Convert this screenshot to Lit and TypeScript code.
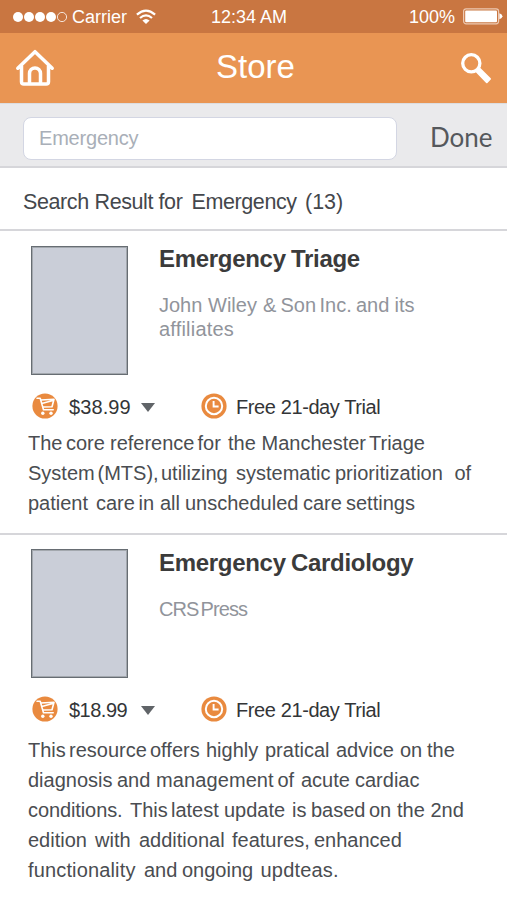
import { LitElement, html, css, svg } from "lit";
import { customElement, property } from "lit/decorators.js";

type Word = [start: number, text: string, tracking?: number];
type Line = Word[];

interface Book {
  title: Line;
  publisher: Line[];
  price: Line;
  text: Line[];
}

const heading: Line = [[0, "Search"], [71.5, "Result"], [135.5, "for"], [168.5, "Emergency"], [282, "(13)", 0]];

const books: Book[] = [
  {
    title: [[0, "Emergency"], [132, "Triage"]],
    publisher: [
      [[0, "John"], [49, "Wiley"], [104, "&"], [121.5, "Son"], [160.5, "Inc."], [197, "and"], [235.5, "its"]],
      [[0, "affiliates", 0.2]],
    ],
    price: [[0, "$38.99", 0.1]],
    text: [
      [[0, "The"], [38, "core"], [82, "reference"], [169.5, "for"], [200, "the"], [233.5, "Manchester"], [341, "Triage"]],
      [[0, "System"], [69.5, "(MTS),"], [133, "utilizing"], [208, "systematic"], [307, "prioritization"], [426.5, "of"]],
      [[0, "patient"], [68, "care"], [110.5, "in"], [132, "all"], [157, "unscheduled"], [275, "care"], [318, "settings"]],
    ],
  },
  {
    title: [[0, "Emergency"], [132, "Cardiology"]],
    publisher: [[[0, "CRS", -0.9], [41.5, "Press", -0.9]]],
    price: [[0, "$18.99", -0.5]],
    text: [
      [[0, "This"], [41, "resource"], [122, "offers"], [178, "highly"], [237, "pratical"], [308, "advice"], [372, "on"], [399, "the"]],
      [[0, "diagnosis"], [89, "and"], [128, "management", 0.1], [249.5, "of"], [273, "acute"], [327, "cardiac"]],
      [[0, "conditions.", -0.1], [102, "This"], [143, "latest"], [196, "update"], [264, "is"], [283, "based"], [341, "on"], [369, "the"], [402.5, "2nd"]],
      [[0, "edition"], [67, "with"], [111, "additional"], [204, "features,"], [286, "enhanced"]],
      [[0, "functionality", 0.15], [116, "and"], [154, "ongoing"], [232.5, "updteas.", 0.2]],
    ],
  },
];

@customElement("text-line")
class TextLine extends LitElement {
  @property({ attribute: false }) words: Line = [];

  static styles = css`
    :host { display: block; }
    .line { display: grid; white-space: pre; }
  `;

  render() {
    const columns = this.words
      .map(([x], i) => (i + 1 < this.words.length ? `${this.words[i + 1][0] - x}px` : "max-content"))
      .join(" ");
    return html`<div class="line" style="grid-template-columns:${columns}">${this.words.map(
      ([, word, tracking]) =>
        tracking === undefined
          ? html`<span>${word} </span>`
          : html`<span style="letter-spacing:${tracking}px">${word} </span>`
    )}</div>`;
  }
}

const cartIcon = svg`
  <circle cx="13" cy="13" r="12.6" fill="#e98a3f" />
  <path d="M5 5.200h3.200l3.300 11.600h9.700M9 7l13-.8-2 7.600-9.200.2M9.800 10.600l11-3" fill="none" stroke="#fff" stroke-width="1.600" stroke-linejoin="round" stroke-linecap="round" />
  <circle cx="10.800" cy="20.300" r="1.700" fill="#fff" /><circle cx="19" cy="20.300" r="1.700" fill="#fff" />`;

const clockIcon = svg`
  <circle cx="13" cy="13" r="12.6" fill="#e98a3f" />
  <circle cx="13" cy="13" r="8.200" fill="none" stroke="#fff" stroke-width="2" />
  <path d="M12.600 8v5.500h5" fill="none" stroke="#fff" stroke-width="1.900" />`;

@customElement("book-item")
class BookItem extends LitElement {
  @property({ attribute: false }) book!: Book;

  static styles = css`
    :host { display: block; box-sizing: border-box; padding: 14px 0 0 28px; }
    .head { display: flex; height: 130px; padding-left: 2.5px; }
    .cover {
      box-sizing: border-box; width: 97px; height: 129px; margin-top: var(--cover-gap, 0px); flex: none;
      background: #caced8; border: 1px solid #676d73; box-shadow: inset 0 0 0 1px #a3a8ae;
    }
    .info { margin-left: 31.5px; }
    .title { font-size: 24px; line-height: 28px; font-weight: 700; letter-spacing: -0.3px; color: #3b3b3b; }
    .publisher { margin-top: var(--publisher-gap, 20px); font-size: 20px; line-height: 24px; color: #91949b; }
    .offers { display: flex; align-items: center; height: 28px; margin-top: var(--offers-gap, 17px); padding-left: 4px; font-size: 20px; letter-spacing: -0.4px; color: #333537; }
    .icon { width: 26px; height: 26px; flex: none; margin-top: -3px; }
    .clock { margin-top: -2px; }
    .price { width: 72px; margin-left: 11px; }
    .arrow { width: 14px; height: 9px; margin-right: 45.5px; fill: #606468; }
    .trial { margin-left: 9.5px; }
    .text { margin-top: var(--text-gap, 11px); font-size: 20px; line-height: 30px; color: #4a4d51; }
  `;

  render() {
    const b = this.book;
    return html`
      <div class="head">
        <div class="cover"></div>
        <div class="info">
          <text-line class="title" .words=${b.title}></text-line>
          <div class="publisher">${b.publisher.map((l) => html`<text-line .words=${l}></text-line>`)}</div>
        </div>
      </div>
      <div class="offers">
        <svg class="icon" viewBox="0 0 26 26">${cartIcon}</svg>
        <text-line class="price" .words=${b.price}></text-line>
        <svg class="arrow" viewBox="0 0 14 9"><path d="M0 0h14L7 9z" /></svg>
        <svg class="icon clock" viewBox="0 0 26 26">${clockIcon}</svg>
        <span class="trial">Free 21-day Trial</span>
      </div>
      <div class="text">${b.text.map((l) => html`<text-line .words=${l}></text-line>`)}</div>
    `;
  }
}

@customElement("app-root")
class AppRoot extends LitElement {
  static styles = css`
    :host {
      display: block; width: 507px; height: 900px; overflow: hidden; background: #fff;
      font-family: "Liberation Sans", Arial, sans-serif;
    }
    .status { display: grid; grid-template-columns: 211px 1fr auto; align-items: center; height: 33px; background: #c97641; color: #fff; font-size: 18px; }
    .status span { padding-top: 2px; }
    .carrier { display: flex; align-items: center; padding-left: 12px; }
    .dots { width: 56px; height: 12px; margin-right: 4px; }
    .wifi { width: 20px; height: 16px; margin-left: 9px; }
    .power { display: flex; align-items: center; padding-right: 4px; }
    .battery { width: 40px; height: 17px; margin-left: 8px; }
    .nav { box-sizing: border-box; display: grid; grid-template-columns: 60px 1fr 60px; align-items: center; height: 70px; background: #e99553; color: #fff; }
    .home { width: 40px; height: 38px; margin-left: 15px; }
    .store { text-align: center; font-size: 33px; line-height: 40px; margin: -3px 0 0 4px; }
    .search { width: 32px; height: 32px; margin-left: 13px; }
    .finder { box-sizing: border-box; display: flex; align-items: flex-start; height: 65px; padding: 13px 0 0 23px; background: #eaeaec; border-bottom: 2px solid #d6d6da; border-top: 1px solid #dcdde0; }
    .field { box-sizing: border-box; width: 374px; height: 43px; padding-left: 15px; border: 1px solid #d3d6e3; border-radius: 8px; background: #fff; color: #a9afb8; font-size: 20px; line-height: 41px; letter-spacing: -0.2px; }
    .done { margin-left: 33px; font-family: Lato, sans-serif; font-size: 26px; line-height: 40px; color: #55585c; }
    .result { box-sizing: border-box; height: 63px; padding: 21px 0 0 23px; border-bottom: 2px solid #d6d6da; font-size: 21.5px; line-height: 26px; letter-spacing: -0.4px; color: #44474c; }
    .first {
      height: 304px; border-bottom: 2px solid #d6d6da;
      --cover-gap: 1px; --publisher-gap: 20px; --offers-gap: 18px; --text-gap: 7px;
    }
  `;

  render() {
    return html`
      <div class="status">
        <div class="carrier">
          <svg class="dots" viewBox="0 0 56 12">
            ${[6, 17, 28, 39].map((x) => svg`<circle cx=${x} cy="6" r="5" fill="#fff" />`)}
            <circle cx="50" cy="6" r="4.6" fill="none" stroke="#fff" stroke-width=".8" />
          </svg>
          <span>Carrier</span>
          <svg class="wifi" viewBox="0 0 20 16" fill="none" stroke="#fff" stroke-width="2.2">
            <path d="M.9 5.6Q10-2.4 19.1 5.6M4 9Q10 3.6 16 9" /><path d="M6.4 11.4Q10 8.4 13.6 11.4L10 15z" fill="#fff" stroke="none" />
          </svg>
        </div>
        <span>12:34 AM</span>
        <div class="power">
          <span>100%</span>
          <svg class="battery" viewBox="0 0 40 17">
            <rect x=".6" y=".8" width="35" height="15" rx="2.5" fill="none" stroke="#edc9b2" stroke-width="1.2" />
            <rect x="2.2" y="2.4" width="31.8" height="11.8" rx="1" fill="#fff" /><path d="M36.4 5.2q3 1 3 3t-3 3z" fill="#fff" />
          </svg>
        </div>
      </div>
      <div class="nav">
        <svg class="home" viewBox="0 0 40 38" fill="none" stroke="#fff" stroke-width="3.5" stroke-linecap="round" stroke-linejoin="round">
          <path d="M2.8 19.2 20 2.700l17.200 16.500M6.500 17v15.700q0 2.300 2.300 2.300h22.400q2.300 0 2.300-2.300V17M14.500 34V24.500a5.500 5.500 0 0 1 11 0V34" />
        </svg>
        <div class="store">Store</div>
        <svg class="search" viewBox="0 0 32 32" stroke="#fff" stroke-linejoin="round">
          <circle cx="11.3" cy="11.3" r="8.6" stroke-width="3.3" fill="none" />
          <path d="M19.800 16.700 30.100 26.900l-3.300 3.400L16.700 19.800z" fill="#fff" stroke-width="1.8" />
        </svg>
      </div>
      <div class="finder">
        <div class="field">Emergency</div>
        <div class="done">Done</div>
      </div>
      <div class="result"><text-line .words=${heading}></text-line></div>
      <book-item class="first" .book=${books[0]}></book-item>
      <book-item .book=${books[1]}></book-item>
    `;
  }
}
